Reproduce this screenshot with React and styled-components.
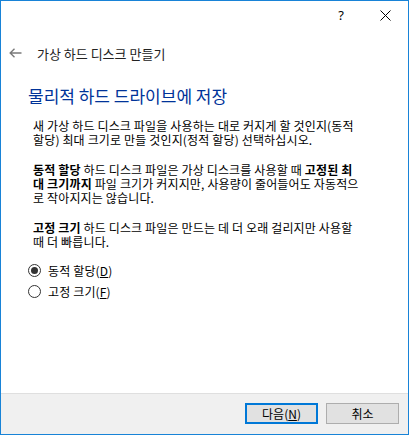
import React from "react";
import styled, { createGlobalStyle } from "styled-components";

const GlobalStyle = createGlobalStyle`
  html, body {
    margin: 0;
    padding: 0;
    background: #ffffff;
  }
  body {
    font-family: "Noto Sans CJK KR", "Noto Sans", sans-serif;
  }
`;

const KR = `"Noto Sans CJK KR", "Noto Sans", sans-serif`;

const App = () => {
  return (
    <>
      <GlobalStyle />
      <Window>
        <TitleBar>
          <HelpButton>?</HelpButton>
          <CloseButton>
            <svg width="11" height="11" viewBox="0 0 11 11">
              <path d="M0.5 0.5 L10.5 10.5 M10.5 0.5 L0.5 10.5" stroke="#000" strokeWidth="1" fill="none" />
            </svg>
          </CloseButton>
        </TitleBar>
        <HeaderRow>
          <BackArrow>
            <svg width="13" height="10" viewBox="0 0 13 10">
              <path d="M1 5 H12.5 M5.5 0.8 L1.2 5 L5.5 9.2" stroke="#7a7a7a" strokeWidth="1.4" fill="none" />
            </svg>
          </BackArrow>
          <WizardTitle>가상 하드 디스크 만들기</WizardTitle>
        </HeaderRow>
        <Content>
          <Heading>물리적 하드 드라이브에 저장</Heading>
          <Paragraph>
            새 가상 하드 디스크 파일을 사용하는 대로 커지게 할 것인지(동적
            <br />
            할당) 최대 크기로 만들 것인지(정적 할당) 선택하십시오.
          </Paragraph>
          <Paragraph>
            <b>동적 할당</b> 하드 디스크 파일은 가상 디스크를 사용할 때 <b>고정된 최</b>
            <br />
            <b>대 크기까지</b> 파일 크기가 커지지만, 사용량이 줄어들어도 자동적으
            <br />로 작아지지는 않습니다.
          </Paragraph>
          <Paragraph>
            <b>고정 크기</b> 하드 디스크 파일은 만드는 데 더 오래 걸리지만 사용할
            <br />때 더 빠릅니다.
          </Paragraph>
          <RadioGroup>
            <RadioRow>
              <RadioCircle $checked />
              <RadioLabel>
                동적 할당(<u>D</u>)
              </RadioLabel>
            </RadioRow>
            <RadioRow>
              <RadioCircle />
              <RadioLabel>
                고정 크기(<u>F</u>)
              </RadioLabel>
            </RadioRow>
          </RadioGroup>
        </Content>
        <Footer>
          <DialogButton $default>
            다음(<u>N</u>)
          </DialogButton>
          <DialogButton>취소</DialogButton>
        </Footer>
      </Window>
    </>
  );
};

const Window = styled.div`
  box-sizing: border-box;
  width: 409px;
  height: 435px;
  border: 1px solid #1883d7;
  background: #ffffff;
  display: flex;
  flex-direction: column;
`;

const TitleBar = styled.div`
  height: 28px;
  display: flex;
  justify-content: flex-end;
  align-items: center;
  padding-right: 17px;
  gap: 36px;
`;

const HelpButton = styled.span`
  font-family: "Noto Sans", "DejaVu Sans", sans-serif;
  font-size: 13px;
  color: #000;
  line-height: 1;
  margin-top: 1px;
`;

const CloseButton = styled.span`
  display: flex;
  width: 11px;
  height: 11px;
`;

const HeaderRow = styled.div`
  margin-top: 12px;
  height: 24px;
  display: flex;
  align-items: center;
  padding-left: 8px;
`;

const BackArrow = styled.span`
  display: flex;
  width: 13px;
  height: 10px;
`;

const WizardTitle = styled.span`
  margin-left: 15px;
  font-family: ${KR};
  font-size: 13px;
  color: #222222;
`;

const Content = styled.div`
  padding-left: 27px;
  display: flex;
  flex-direction: column;
`;

const Heading = styled.h1`
  margin: 21px 0 0;
  font-family: ${KR};
  font-weight: 400;
  font-size: 17px;
  line-height: 20px;
  color: #003399;
`;

const Paragraph = styled.p`
  margin: 0;
  padding-left: 5px;
  font-family: ${KR};
  font-size: 12px;
  line-height: 14px;
  letter-spacing: 0.15px;
  color: #000;
  white-space: nowrap;
  & + & {
    margin-top: 16px;
  }
  &:first-of-type {
    margin-top: 13px;
  }
  b {
    font-weight: 700;
  }
`;

const RadioGroup = styled.div`
  margin-top: 11px;
  display: flex;
  flex-direction: column;
`;

const RadioRow = styled.div`
  height: 21px;
  display: flex;
  align-items: center;
`;

const RadioCircle = styled.span`
  box-sizing: border-box;
  width: 13px;
  height: 13px;
  border-radius: 50%;
  border: 1px solid #333333;
  background: #ffffff;
  display: flex;
  align-items: center;
  justify-content: center;
  &::after {
    content: "";
    display: ${(p) => (p.$checked ? "block" : "none")};
    width: 7px;
    height: 7px;
    border-radius: 50%;
    background: #333333;
  }
`;

const RadioLabel = styled.span`
  margin-left: 7px;
  font-family: ${KR};
  font-size: 12px;
  letter-spacing: 0.15px;
  color: #000;
`;

const Footer = styled.div`
  margin-top: auto;
  box-sizing: border-box;
  height: 41px;
  border-top: 1px solid #dfdfdf;
  background: #f0f0f0;
  display: flex;
  justify-content: flex-end;
  align-items: flex-start;
  padding: 9px 9px 0 0;
  gap: 8px;
`;

const DialogButton = styled.div`
  box-sizing: border-box;
  width: 73px;
  height: 21px;
  background: #e1e1e1;
  border: ${(p) => (p.$default ? "2px solid #0078d7" : "1px solid #adadad")};
  display: flex;
  align-items: center;
  justify-content: center;
  font-family: ${KR};
  font-size: 12px;
  color: #000;
`;

export default App;
